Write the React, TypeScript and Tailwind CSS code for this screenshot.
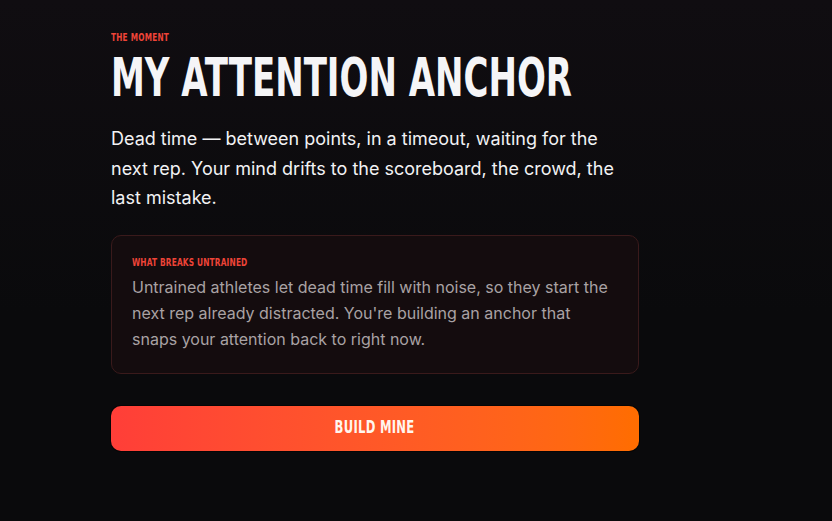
const display = "font-['DejaVu_Sans_Condensed','DejaVu_Sans',sans-serif]";
const body = "font-['Inter','Noto_Sans',sans-serif]";

// DejaVu Condensed is still wide, so the display type gets squeezed horizontally
const squeeze = "inline-block origin-left whitespace-nowrap";

export default function App() {
  return (
    <main className="min-h-[521px] bg-[#0a0a0c] bg-gradient-to-b from-[#100d11] to-[#0a0a0c] to-60%">
      <section className="ml-[111px] flex w-[528px] flex-col pt-[30px]">
        <p className={`${display} text-[11px] font-bold uppercase leading-4 tracking-[0.03em] text-[#ef4438]`}>
          <span className={`${squeeze} scale-x-[0.74]`}>The Moment</span>
        </p>
        <h1 className={`${display} mt-[2px] text-[54px] font-bold uppercase leading-[60px] text-[#f5f5f7]`}>
          <span className={`${squeeze} scale-x-[0.7]`}>My Attention Anchor</span>
        </h1>
        <p className={`${body} mt-[16px] text-lg leading-[29.5px] text-[#f2f2f4]`}>
          Dead time — between points, in a timeout, waiting for the next rep. Your mind drifts to the
          scoreboard, the crowd, the last mistake.
        </p>

        <div className="mt-[22px] rounded-[10px] border border-[#3a1a1b] bg-[#140c0e] px-5 pt-[19px] pb-[21px]">
          <p className={`${display} text-[11px] font-bold uppercase leading-4 tracking-[0.02em] text-[#ef4438]`}>
            <span className={`${squeeze} scale-x-[0.75]`}>What Breaks Untrained</span>
          </p>
          <p className={`${body} mt-[3px] text-base leading-[26px] text-[#a9a2a4]`}>
            Untrained athletes let dead time fill with noise, so they start the next rep already
            distracted. You're building an anchor that snaps your attention back to right now.
          </p>
        </div>

        <button
          className={`${display} mt-[32px] flex h-[45px] w-full items-center justify-center rounded-[10px] bg-gradient-to-r from-[#ff3e38] to-[#ff6d00] text-[17px] font-bold uppercase tracking-[0.02em] text-[#fff6ef] shadow-[0_0_0_1px_rgba(0,0,0,0.5)]`}
        >
          <span className="inline-block scale-x-[0.76] whitespace-nowrap">Build Mine</span>
        </button>
      </section>
    </main>
  );
}
